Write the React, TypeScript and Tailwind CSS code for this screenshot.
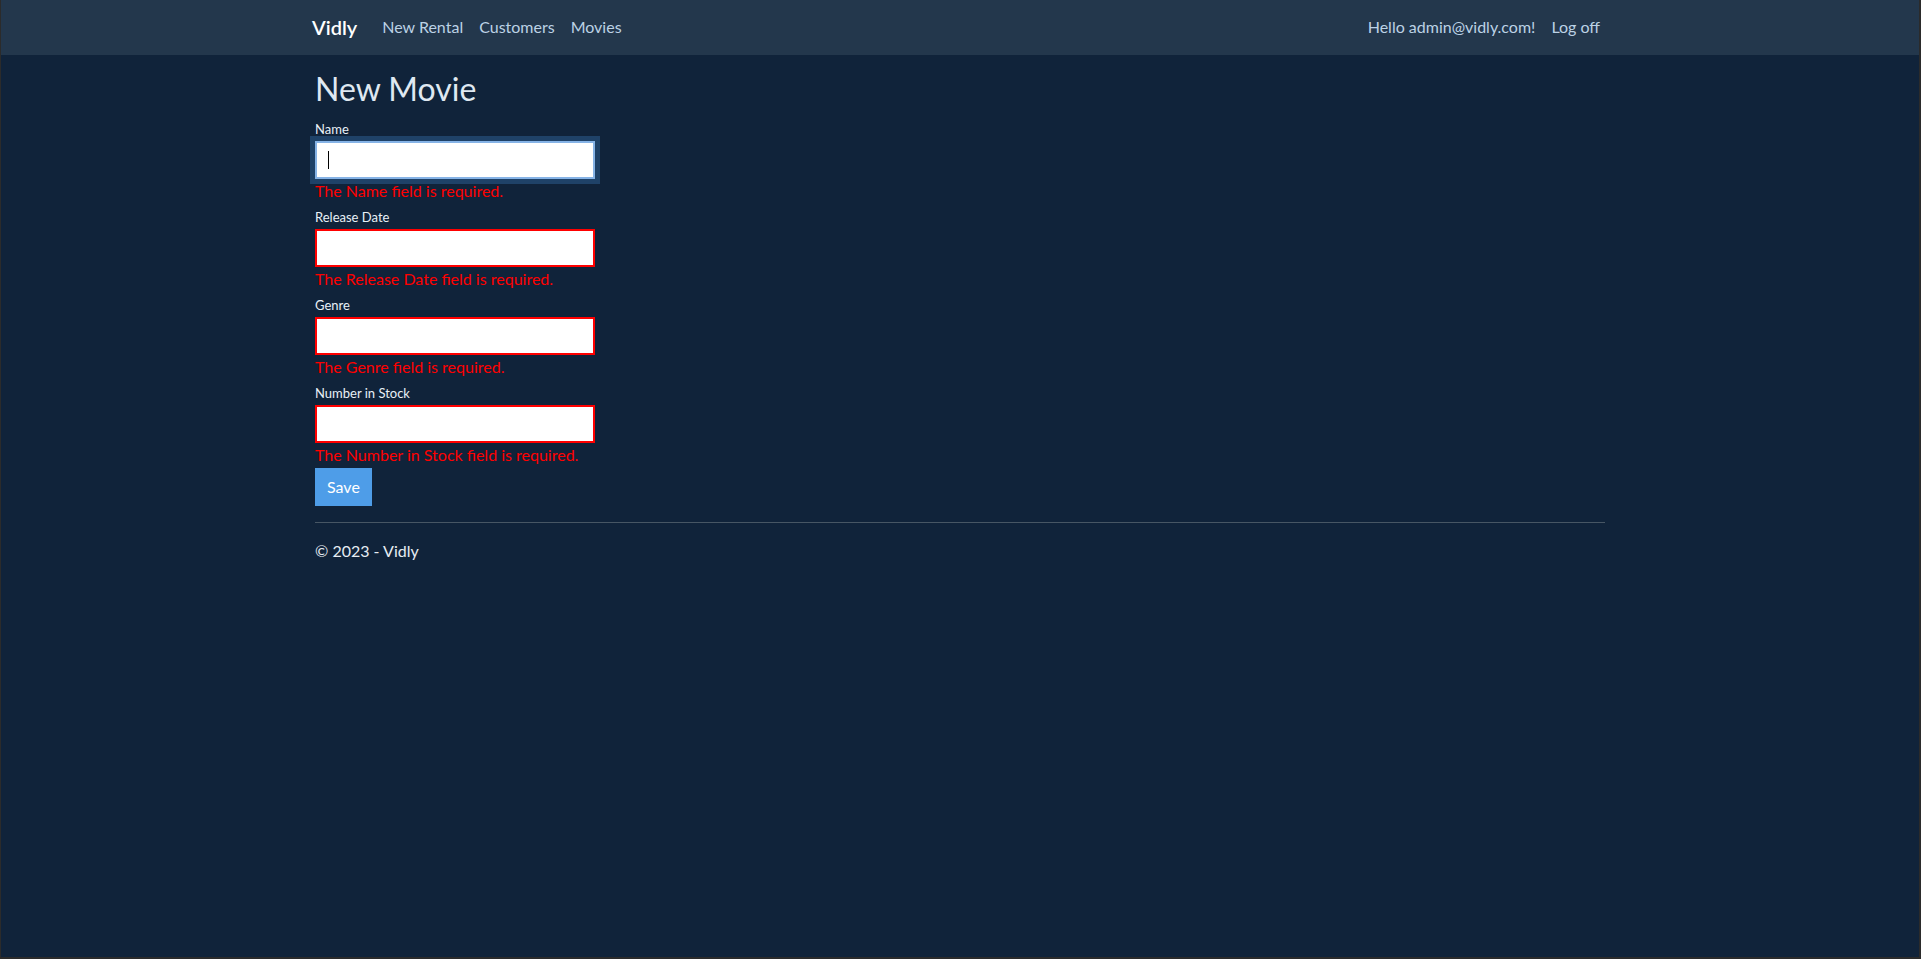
import React from "react";

const fields = [
  { label: "Name", error: "The Name field is required.", focused: true },
  { label: "Release Date", error: "The Release Date field is required." },
  { label: "Genre", error: "The Genre field is required." },
  { label: "Number in Stock", error: "The Number in Stock field is required." },
];

const NavBar = () => (
  <nav className="h-[55px] bg-[#23374c]">
    <div className="mx-auto flex h-full w-[1296px] items-center justify-between pb-[2px]">
      <div className="flex items-center">
        <a className="mr-[17px] text-[20px] leading-[30px] font-semibold text-white">Vidly</a>
        <ul className="flex">
          {["New Rental", "Customers", "Movies"].map((item) => (
            <li key={item}>
              <a className="block px-2 text-[16px] leading-6 text-[#bcd2e5]">{item}</a>
            </li>
          ))}
        </ul>
      </div>
      <ul className="flex">
        <li>
          <a className="block px-2 text-[16px] leading-6 text-[#bcd2e5]">Hello admin@vidly.com!</a>
        </li>
        <li>
          <a className="block px-2 text-[16px] leading-6 text-[#bcd2e5]">Log off</a>
        </li>
      </ul>
    </div>
  </nav>
);

const Field = ({
  label,
  error,
  focused,
  first,
}: {
  label: string;
  error: string;
  focused?: boolean;
  first?: boolean;
}) => (
  <div className={first ? "" : "mt-[6px]"}>
    <label className="block text-[13px] leading-4 text-[#e8f0f7]">{label}</label>
    {focused ? (
      <div className="mt-1 flex h-[38px] w-[280px] items-center border-2 border-[#86b3e6] bg-white pl-[11px] ring-[5px] ring-[#1f4268]">
        <span className="h-[18px] w-px bg-black" />
      </div>
    ) : (
      <input
        readOnly
        className="mt-1 block h-[38px] w-[280px] border-2 border-[#ff0000] bg-white px-3 outline-none"
      />
    )}
    <div className="text-[16px] leading-6 text-[#ff0000]">{error}</div>
  </div>
);

export default function App() {
  return (
    <div
      className="min-h-screen border-b-2 border-l border-r-2 border-[#2b2b2b] bg-[#10233a]"
      style={{ fontFamily: "Lato, 'Open Sans', sans-serif" }}
    >
      <NavBar />
      <main className="mx-auto w-[1290px]">
        <h2 className="mt-[15px] text-[32px] leading-[38px] text-[#dfe8f1]">New Movie</h2>
        <form className="mt-[13px]">
          {fields.map((f, i) => (
            <Field key={f.label} label={f.label} error={f.error} focused={f.focused} first={i === 0} />
          ))}
          <button
            type="button"
            className="mt-px h-[38px] bg-[#4e9de8] px-3 text-[16px] text-white"
          >
            Save
          </button>
        </form>
        <hr className="mt-4 border-t border-[#475664]" />
        <footer className="mt-4">
          <p className="text-[16px] leading-6 text-[#e6edf3]">&copy; 2023 - Vidly</p>
        </footer>
      </main>
    </div>
  );
}
